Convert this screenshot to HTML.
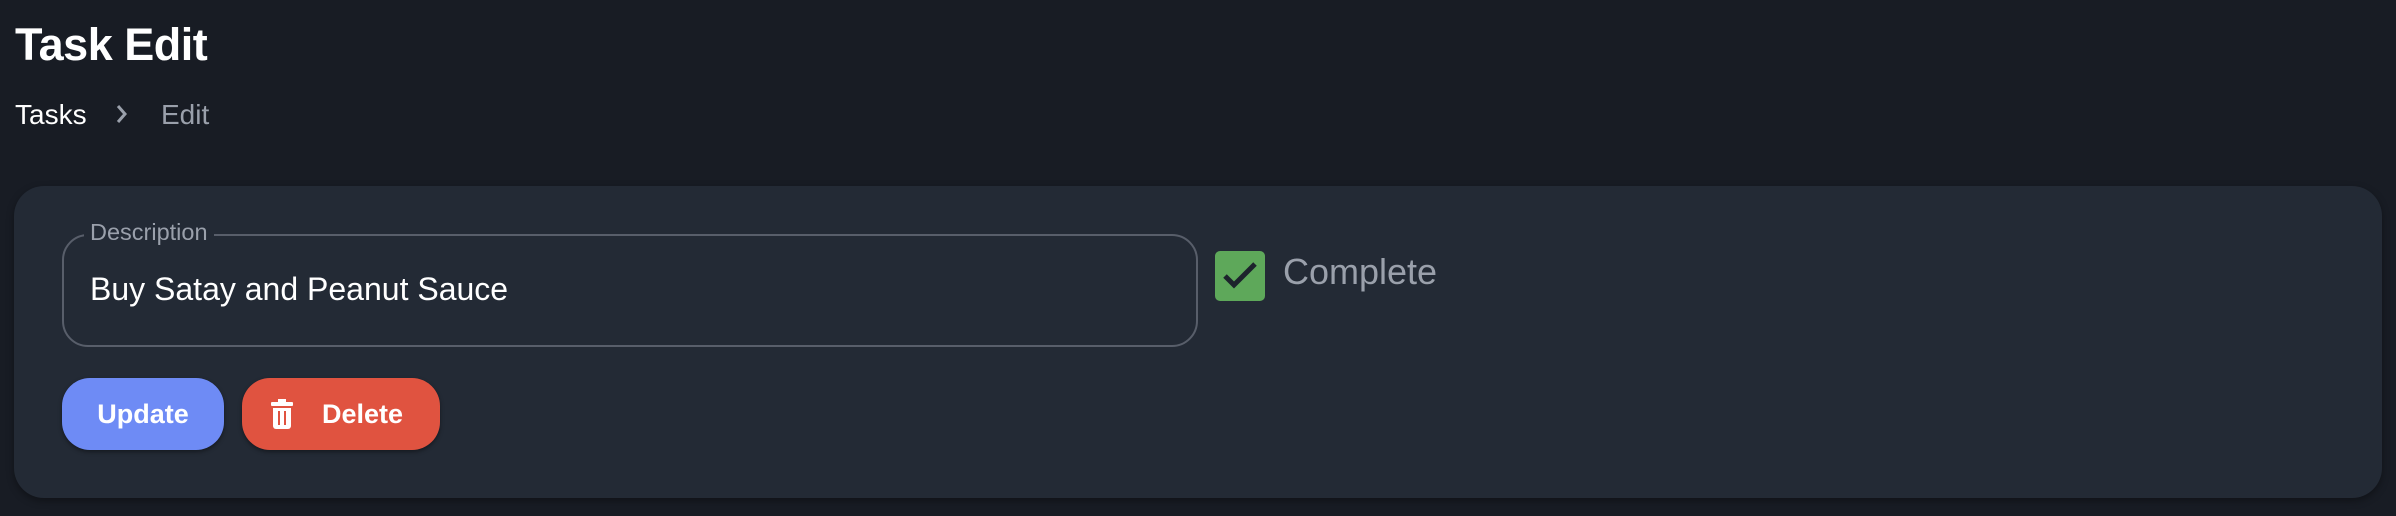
<!DOCTYPE html>
<html><head><meta charset="utf-8"><style>
html,body{margin:0;padding:0;width:2396px;height:516px;background:#181c24;overflow:hidden;font-family:"Liberation Sans",sans-serif;}
.t{position:absolute;left:15px;top:19px;font-size:45px;font-weight:bold;color:#fff;letter-spacing:-0.5px}
.bc{position:absolute;top:99px;font-size:28px}
.card{position:absolute;left:14px;top:186px;width:2368px;height:312px;background:#232a35;border-radius:30px;box-shadow:0 3px 8px rgba(0,0,0,.35)}
.inp{position:absolute;left:62px;top:234px;width:1132px;height:109px;border:2px solid #585e6a;border-radius:26px}
.lbl{position:absolute;left:84px;top:219px;padding:0 6px;background:#232a35;color:#9aa0ab;font-size:23.5px}
.val{position:absolute;left:90px;top:271px;color:#fff;font-size:32px}
.cb{position:absolute;left:1215px;top:251px;width:50px;height:50px;background:#5ea85a;border-radius:5px}
.cmp{position:absolute;left:1283px;top:251px;color:#9aa0ab;font-size:36px}
.btn{position:absolute;top:378px;height:72px;border-radius:28px;color:#fff;font-weight:bold;font-size:27px;line-height:72px;box-shadow:0 2px 4px rgba(0,0,0,.4)}
</style></head><body>
<div class="t">Task Edit</div>
<div class="bc" style="left:15px;color:#fff">Tasks</div>
<svg style="position:absolute;left:115px;top:103px" width="14" height="22" viewBox="0 0 14 22"><path d="M3 3l7 8-7 8" fill="none" stroke="#9aa0ab" stroke-width="3"/></svg>
<div class="bc" style="left:161px;color:#9aa0ab">Edit</div>
<div class="card"></div>
<div class="inp"></div>
<div class="lbl">Description</div>
<div class="val">Buy Satay and Peanut Sauce</div>
<div class="cb"><svg width="50" height="50" viewBox="0 0 50 50"><path d="M10 25l9 9 21-21" fill="none" stroke="#1d232c" stroke-width="5"/></svg></div>
<div class="cmp">Complete</div>
<div class="btn" style="left:62px;width:162px;background:#6e8bf5;text-align:center">Update</div>
<div class="btn" style="left:242px;width:198px;background:#e05340">
<svg style="position:absolute;left:28px;top:21px" width="24" height="30" viewBox="0 0 24 30"><rect x="8" y="0" width="8" height="4" fill="#fff"/><rect x="1" y="3" width="22" height="4" rx="1" fill="#fff"/><path d="M3 9h18v18a3 3 0 0 1-3 3H6a3 3 0 0 1-3-3z" fill="#fff"/><rect x="8" y="12" width="2" height="14" fill="#e05340"/><rect x="14" y="12" width="2" height="14" fill="#e05340"/></svg>
<span style="position:absolute;left:80px">Delete</span></div>
</body></html>
